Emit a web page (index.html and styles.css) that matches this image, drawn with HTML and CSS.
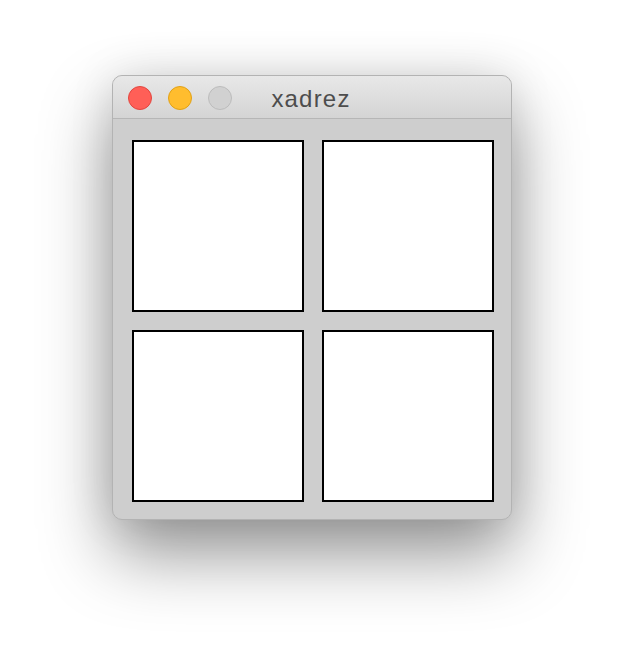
FILE: index.html
```html
<!DOCTYPE html>
<html>
<head>
<meta charset="utf-8">
<title>xadrez</title>
<link rel="stylesheet" href="styles.css">
</head>
<body>
<div class="window">
  <div class="titlebar">
    <div class="lights">
      <span class="light red"></span>
      <span class="light yellow"></span>
      <span class="light grey"></span>
    </div>
    <div class="title">xadrez</div>
    <div></div>
  </div>
  <div class="content">
    <div class="cell"></div>
    <div class="cell"></div>
    <div class="cell"></div>
    <div class="cell"></div>
  </div>
</div>
</body>
</html>
```
FILE: styles.css
```css
html {
  background: #ffffff;
}
body {
  margin: 0;
  min-height: 668px;
  box-sizing: border-box;
  padding-top: 75px;
  font-family: "Liberation Sans", Arial, sans-serif;
}
.window {
  width: 400px;
  box-sizing: border-box;
  margin: 0 auto;
  border: 1px solid #b3b3b3;
  border-radius: 10px;
  overflow: hidden;
  background: #cecece;
  box-shadow: 0 34px 70px rgba(0, 0, 0, 0.42), 0 0 45px rgba(0, 0, 0, 0.1);
}
.titlebar {
  height: 42px;
  border-bottom: 1px solid #b6b6b6;
  background: linear-gradient(#e8e8e8, #d4d4d4);
  display: grid;
  grid-template-columns: 1fr auto 1fr;
  align-items: center;
}
.lights {
  display: flex;
  gap: 16px;
  padding-left: 15px;
  margin-top: 1px;
}
.light {
  width: 24px;
  height: 24px;
  box-sizing: border-box;
  border-radius: 50%;
  border: 1px solid;
}
.red { background: #ff5f57; border-color: #e2463f; }
.yellow { background: #ffbd2e; border-color: #e1a116; }
.grey { background: #d1d1d1; border-color: #bcbcbc; }
.title {
  font-size: 24px;
  letter-spacing: 1.2px;
  color: #4d4d4d;
  margin-top: 3px;
  margin-right: 2px;
}
.content {
  display: grid;
  grid-template-columns: 172px 172px;
  grid-auto-rows: 172px;
  gap: 18px;
  padding: 21px 17px 17px 19px;
}
.cell {
  background: #ffffff;
  border: 2px solid #000000;
}
```
